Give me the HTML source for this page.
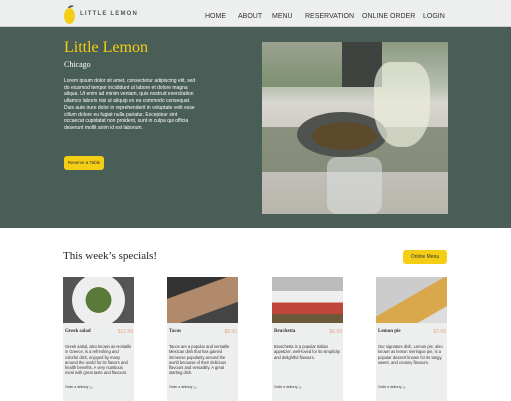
<!DOCTYPE html>
<html><head><style>
*{margin:0;padding:0;box-sizing:border-box}
body{width:511px;height:401px;overflow:hidden;background:#fff;font-family:"Liberation Sans",sans-serif;position:relative}
.a{position:absolute}
nav{position:absolute;top:0;left:0;width:511px;height:27px;background:#edefee;border-bottom:1px solid #ccc}
.nv{position:absolute;top:13px;font-size:7px;color:#333}
.hero{position:absolute;top:27px;left:0;width:511px;height:201px;background:#495e57}
.ser{font-family:"Liberation Serif",serif}
.card{position:absolute;top:277px;width:71px;height:124px;background:#edefee}
.card .im{height:46px}
.card .t{position:absolute;top:52px;left:2px;font-size:5px;font-weight:bold;font-family:"Liberation Serif",serif;color:#333}
.card .p{position:absolute;top:52px;right:1px;font-size:5px;color:#e8a58a}
.card .d{position:absolute;top:67px;left:2px;right:2px;font-size:4.1px;line-height:5.3px;color:#333}
.card .o{position:absolute;top:108px;left:2px;font-size:3.3px;color:#333}
</style></head><body>
<nav>
<svg class="a" style="left:63px;top:3px" width="14" height="22" viewBox="0 0 14 22"><ellipse cx="6.5" cy="13" rx="5.5" ry="8" fill="#f4ce14"/><path d="M5 4 Q8 1 11 3 Q8 5 5 5Z" fill="#495e57"/></svg>
<div class="a" style="left:80px;top:11px;font-size:6px;letter-spacing:1.2px;font-weight:bold;color:#495e57">LITTLE LEMON</div>
<div class="nv" style="left:205px">HOME</div>
<div class="nv" style="left:238px">ABOUT</div>
<div class="nv" style="left:272px">MENU</div>
<div class="nv" style="left:305px">RESERVATION</div>
<div class="nv" style="left:362px">ONLINE ORDER</div>
<div class="nv" style="left:423px">LOGIN</div>
</nav>
<div class="hero">
<div class="a ser" style="left:64px;top:12px;font-size:16px;color:#f4ce14">Little Lemon</div>
<div class="a ser" style="left:64px;top:33px;font-size:8px;color:#fff">Chicago</div>
<div class="a" style="left:64px;top:51px;width:134px;font-size:5px;line-height:6.7px;color:#fff">Lorem ipsum dolor sit amet, consectetur adipiscing elit, sed do eiusmod tempor incididunt ut labore et dolore magna aliqua. Ut enim ad minim veniam, quis nostrud exercitation ullamco laboris nisi ut aliquip ex ea commodo consequat. Duis aute irure dolor in reprehenderit in voluptate velit esse cillum dolore eu fugiat nulla pariatur. Excepteur sint occaecat cupidatat non proident, sunt in culpa qui officia deserunt mollit anim id est laborum.</div>
<div class="a" style="left:64px;top:129px;width:40px;height:14px;background:#f4ce14;border-radius:3px;font-size:4.5px;line-height:14px;text-align:center;color:#333">Reserve a Table</div>
<div class="a" style="left:262px;top:15px;width:186px;height:172px;overflow:hidden;background:linear-gradient(180deg,#8a9a80 0%,#b5bdae 25%,#d8d6cf 35%,#c9c6bf 60%,#b8b5ad 100%)">
<div class="a" style="left:0;top:0;width:80px;height:45px;background:linear-gradient(180deg,#9aa28f,#7e9070)"></div>
<div class="a" style="left:80px;top:0;width:40px;height:45px;background:#3e4340"></div>
<div class="a" style="left:0;top:85px;width:186px;height:45px;background:#5b6a50;opacity:.6"></div>
<div class="a" style="left:35px;top:70px;width:90px;height:45px;border-radius:50%;background:#4f524f"></div>
<div class="a" style="left:50px;top:80px;width:65px;height:28px;border-radius:50%;background:#5c4a2c"></div>
<div class="a" style="left:112px;top:20px;width:56px;height:85px;border-radius:30% 30% 45% 45%;background:rgba(235,238,220,.7)"></div>
<div class="a" style="left:65px;top:115px;width:55px;height:57px;border-radius:10px;background:rgba(220,225,225,.55)"></div>
</div>
</div>
<div class="a ser" style="left:63px;top:250px;font-size:11px;color:#222">This week’s specials!</div>
<div class="a" style="left:403px;top:250px;width:44px;height:14px;background:#f4ce14;border-radius:3px;font-size:5px;line-height:14px;text-align:center;color:#333">Online Menu</div>

<div class="card" style="left:63px"><div class="im" style="background:radial-gradient(circle at 50% 50%,#5a7a3a 0 30%,#eee 31% 62%,#555 63%)"></div><div class="t">Greek salad</div><div class="p">$12.99</div><div class="d">Greek salad, also known as Horiatiki in Greece, is a refreshing and colorful dish, enjoyed by many around the world for its flavors and health benefits. A very nutritious meal with great taste and flavours.</div><div class="o">Order a delivery 🚲</div></div>
<div class="card" style="left:167px"><div class="im" style="background:linear-gradient(160deg,#333 0 30%,#b08a6a 31% 70%,#444 71%)"></div><div class="t">Tacos</div><div class="p">$8.50</div><div class="d">Tacos are a popular and versatile Mexican dish that has gained immense popularity around the world because of their delicious flavours and versatility. A great starting dish.</div><div class="o">Order a delivery 🚲</div></div>
<div class="card" style="left:272px"><div class="im" style="background:linear-gradient(180deg,#bbb 0 30%,#eee 31% 55%,#c0463a 56% 80%,#6a5a3a 81%)"></div><div class="t">Bruchetta</div><div class="p">$6.99</div><div class="d">Bruschetta is a popular Italian appetizer, well-loved for its simplicity and delightful flavours.</div><div class="o">Order a delivery 🚲</div></div>
<div class="card" style="left:376px"><div class="im" style="background:linear-gradient(150deg,#ccc 0 45%,#d9a84a 46% 80%,#ddd 81%)"></div><div class="t">Lemon pie</div><div class="p">$7.00</div><div class="d">Our signature dish, Lemon pie, also known as lemon meringue pie, is a popular dessert known for its tangy, sweet, and creamy flavours.</div><div class="o">Order a delivery 🚲</div></div>
</body></html>
